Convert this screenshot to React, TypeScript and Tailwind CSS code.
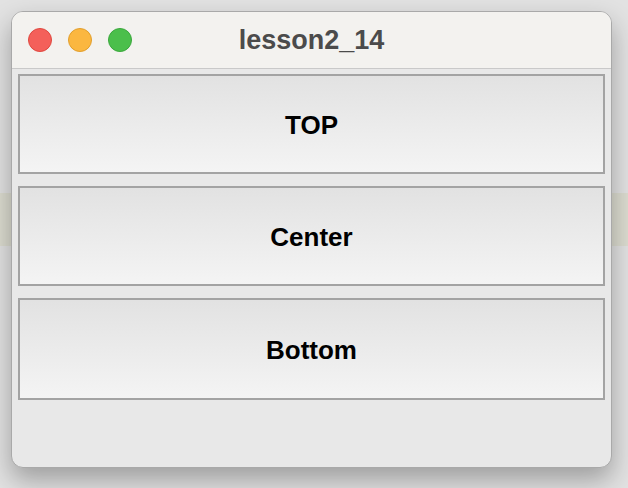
const BUTTONS = ["TOP", "Center", "Bottom"];

export default function App() {
  return (
    <div className="relative h-[488px] w-[628px] overflow-hidden bg-[#e2e2e2] pl-[11px] pt-[11px] font-['Liberation_Sans',Arial,sans-serif]">
      {/* desktop stuff peeking out behind the window */}
      <div className="absolute left-0 top-[193px] h-[53px] w-full bg-[#dcdcd0]" />

      <div className="relative flex h-[457px] w-[601px] flex-col overflow-hidden rounded-[12px] border border-[#a9a9a9] bg-[#e8e8e8] shadow-[0_12px_26px_rgba(0,0,0,0.3)]">
        <div className="flex h-[57px] shrink-0 items-center border-b border-[#c9c9c9] bg-[#f3f2ef] px-[16px]">
          <div className="flex gap-[16px]">
            <span className="h-[24px] w-[24px] rounded-full border border-[#e0483f] bg-[#f4605a]" />
            <span className="h-[24px] w-[24px] rounded-full border border-[#e29f2c] bg-[#fbb740]" />
            <span className="h-[24px] w-[24px] rounded-full border border-[#3aa83c] bg-[#4bbf4b]" />
          </div>
          <div className="flex-1 pr-[104px] text-center text-[27px] font-bold text-[#4b4b4b]">
            lesson2_14
          </div>
        </div>

        <div className="flex flex-col gap-[12px] px-[6px] pt-[5px]">
          {BUTTONS.map((b, i) => (
            <button
              key={b}
              type="button"
              className={`flex items-center justify-center border-2 border-[#a3a3a3] bg-gradient-to-b from-[#e2e2e2] to-[#f4f4f4] pt-[3px] text-[26px] font-bold text-black ${
                i === 2 ? "h-[102px]" : "h-[100px]"
              }`}
            >
              {b}
            </button>
          ))}
        </div>
      </div>
    </div>
  );
}
